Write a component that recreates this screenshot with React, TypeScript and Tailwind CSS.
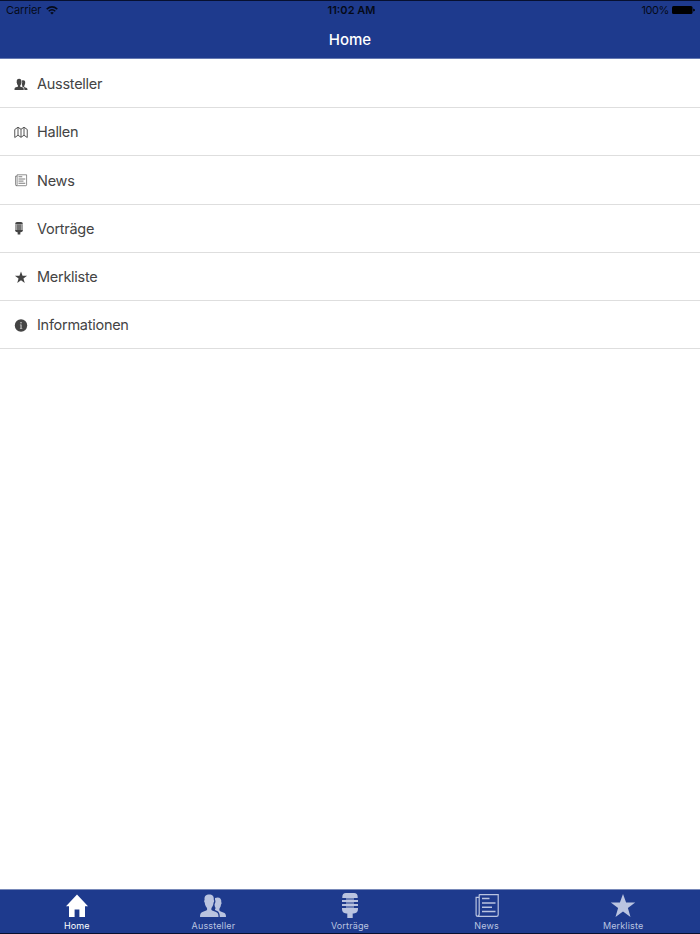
import React from 'react';

type IconName = 'home' | 'people' | 'map' | 'news' | 'mic' | 'star' | 'info';

function Icon({ name, className }: { name: IconName; className: string }) {
  return (
    <svg viewBox="0 0 28 26" className={className} fill="currentColor" aria-hidden="true">
      {name === 'home' && (
        <path d="M14 1.5 25 13.2H22V24H16.4V16.5H11.6V24H6V13.2H3Z" />
      )}
      {name === 'people' && (
        <>
          <path d="M1 24C1 20.7 1.6 19.4 4 18.7L7.3 17.6C8.4 17.1 8.4 15.5 7.5 14.3C6.4 13 5.9 11.4 5.8 9.8C5 9 5 7.5 5.6 7C5.1 3.2 7 1.5 10.2 1.5S15.2 3.2 14.8 7C15.4 7.5 15.3 9 14.5 9.8C14.4 11.4 14 13 12.9 14.3C12.1 15.5 12.1 17.1 13.1 17.6L16.4 18.7C18.9 19.4 19.5 20.7 19.5 24Z" />
          <path d="M16 5.1C20 3.6 22.8 5.5 22.3 9.2C22.8 9.8 22.6 11.1 22 11.5C21.9 13 21.5 14.1 20.8 15.1C20.1 16.1 20.2 17.8 21.2 18.3L24.2 19.4C26.4 20.1 27 21 27 24H20.8C20.8 20.5 20 18.6 17.6 17.7L16 17.1C15.8 16.4 16.1 15.7 16.6 14.9C15.7 13.8 15.5 12.5 15.6 11C16.5 9.7 16.8 8 16 6.8Z" />
        </>
      )}
      {name === 'map' && (
        <path d="M1.5 7 8 2.5 14 6.5 20 2.5 26.5 7V23L20 18.5 14 22.5 8 18.5 1.5 23ZM8 2.5V18.5M14 6.5V22.5M20 2.5V18.5" fill="none" stroke="currentColor" strokeWidth="1.8" />
      )}
      {name === 'news' && (
        <g fill="none" stroke="currentColor" strokeWidth="1.2">
          <path d="M6.2 1.6H25.2V21.7Q25.2 23.4 23.5 23.4H5Q3.1 23.4 3.1 21.5V4.3H6.2M6.2 1.6V20.5Q6.2 23.2 4.6 23.2" />
          <path d="M9 5.5H16.5M9 10H22.5M9 14.2H19M9 18.5H22.5" strokeWidth="1.4" />
        </g>
      )}
      {name === 'mic' && (
        <>
          <path d="M10 5H18V17H10Z" opacity=".5" />
          <path d="M6.3 5V4Q6.3 0 10 0H18Q21.7 0 21.7 4V5ZM6 7H22V9H6ZM6 11H22V13H6ZM6 15H22V16Q22 20 17.8 20.5H16.7V25H11.3V20.5H10.2Q6 20 6 16Z" />
        </>
      )}
      {name === 'star' && (
        <path d="M14 1 17.1 9.6H26.2L18.9 15L21.5 24L14 18.6L6.5 24L9.1 15L1.8 9.6H10.9Z" />
      )}
      {name === 'info' && (
        <>
          <circle cx="14" cy="13" r="12.4" />
          <circle cx="14" cy="7.5" r="1.6" fill="#ccc" />
          <path d="M11.8 11H15.2V18H16.5V19.5H11.8V18H13V12.5H11.8Z" fill="#ccc" />
        </>
      )}
    </svg>
  );
}

const rows: { icon: IconName; label: string; iconClass: string }[] = [
  { icon: 'people', label: 'Aussteller', iconClass: 'h-[13px] w-[14px]' },
  { icon: 'map', label: 'Hallen', iconClass: 'h-[13px] w-[14px]' },
  { icon: 'news', label: 'News', iconClass: 'h-[13px] w-[14px] -ml-[0.5px] mr-[0.5px]' },
  { icon: 'mic', label: 'Vorträge', iconClass: 'h-[13px] w-[14px] -ml-[2.5px] mr-[2.5px]' },
  { icon: 'star', label: 'Merkliste', iconClass: 'h-[13px] w-[14px]' },
  { icon: 'info', label: 'Informationen', iconClass: 'h-[13px] w-[14px]' },
];

const tabs: { icon: IconName; label: string }[] = [
  { icon: 'home', label: 'Home' },
  { icon: 'people', label: 'Aussteller' },
  { icon: 'mic', label: 'Vorträge' },
  { icon: 'news', label: 'News' },
  { icon: 'star', label: 'Merkliste' },
];

export default function App() {
  return (
    <div className="flex h-[934px] w-[700px] flex-col overflow-hidden bg-white font-['Inter',sans-serif]">
      <header className="h-[59px] shrink-0 border-t border-b border-t-[#07102f] border-b-[#6679b1] bg-[#1e3a8d]">
        <div className="grid h-[18px] grid-cols-3 items-center pr-[5px] pl-[6px] text-[11px] leading-[18px] text-[#050a18]">
          <div className="flex items-center gap-[5px]">
            <span className="tracking-[-0.1px]">Carrier</span>
            <svg viewBox="0 0 12 9" className="h-[9px] w-3" fill="none" stroke="currentColor" strokeWidth="1.5">
              <path d="M.7 3.1Q6-1.4 11.3 3.1M2.7 5.2Q6 2.4 9.3 5.2" />
              <path d="M4.2 6.7Q6 5.4 7.8 6.7L6 8.6Z" fill="currentColor" stroke="none" />
            </svg>
          </div>
          <span className="pl-[2px] text-center font-semibold">11:02 AM</span>
          <div className="flex items-center justify-end gap-[3px]">
            <span className="tracking-[-0.4px]">100%</span>
            <svg viewBox="0 0 23 8" className="h-2 w-[23px]" fill="#000">
              <rect width="20.5" height="8" rx="1.5" />
              <path d="M21.2 2.5Q23 3 23 4T21.2 5.5Z" />
            </svg>
          </div>
        </div>
        <h1 className="text-center text-[15px] leading-[41px] font-medium text-white">Home</h1>
      </header>
      <main className="flex-1 pt-[0.8px]">
        <ul className="text-[#444]">
          {rows.map((row) => (
            <li key={row.label} className="flex h-[48.28px] items-center border-b border-[#dedede] pt-[1.3px] pl-[14px]">
              <Icon name={row.icon} className={row.iconClass} />
              <span className="pl-[9px] text-[14.5px] leading-5 tracking-[-0.27px]">{row.label}</span>
            </li>
          ))}
        </ul>
      </main>
      <nav className="flex h-[45px] shrink-0 border-t border-b border-t-[#7889b9] border-b-[#07102f] bg-[#1e3a8d] pr-[8.6px] pl-[8.5px]">
        {tabs.map((tab, index) => (
          <div key={tab.label} className={`flex flex-1 flex-col items-center pt-[3px] ${index === 0 ? 'text-white' : 'text-[#bac4e0]'}`}>
            <Icon name={tab.icon} className="h-[26px] w-[28px]" />
            <span className="text-[9px] leading-[14px] tracking-[0.15px]">{tab.label}</span>
          </div>
        ))}
      </nav>
    </div>
  );
}
